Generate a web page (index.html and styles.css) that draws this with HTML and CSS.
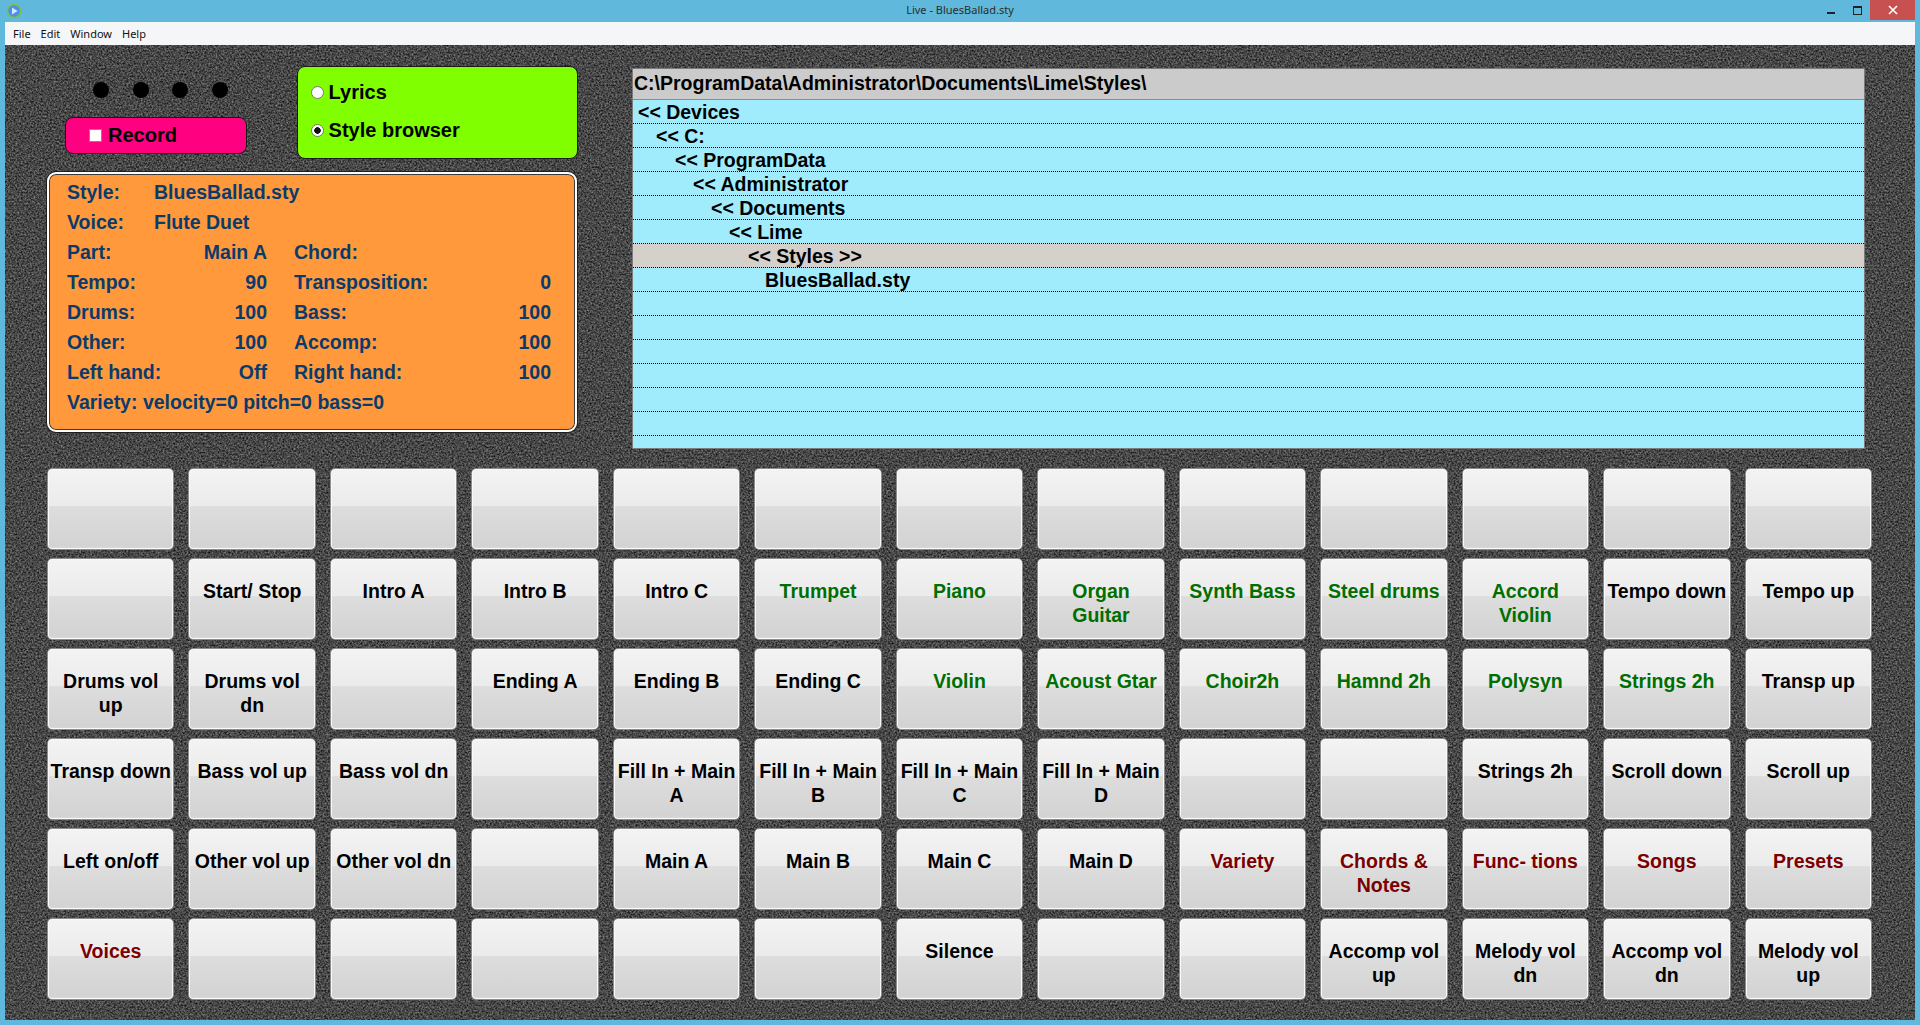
FILE: index.html
```html
<!DOCTYPE html>
<html>
  <head>
    <title>Live - BluesBallad.sty</title>
    <link rel="stylesheet" href="styles.css">
  </head>
  <body>
    <div class="frame">

      <div class="title-bar">
        <div class="title-left">
          <svg class="app-icon" width="16" height="16" viewBox="0 0 16 16">
            <circle cx="8" cy="8" r="6.6" fill="#4f8ee6" stroke="#72c452" stroke-width="1.6"/>
            <path d="M6 4.6 L11.6 8 L6 11.4 Z" fill="#d6e8ff"/>
          </svg>
        </div>
        <div class="title-text">Live - BluesBallad.sty</div>
        <div class="title-right">
          <span class="win-btn"><span class="min-glyph"></span></span>
          <span class="win-btn"><span class="max-glyph"></span></span>
          <span class="win-btn close-btn">
            <svg width="10" height="10" viewBox="0 0 10 10">
              <path d="M1 1 L9 9 M9 1 L1 9" stroke="#fff" stroke-width="1.6"/>
            </svg>
          </span>
        </div>
      </div>

      <div class="client">
        <div class="menu-bar">
          <span class="menu-item">File</span>
          <span class="menu-item">Edit</span>
          <span class="menu-item">Window</span>
          <span class="menu-item">Help</span>
        </div>

        <div class="desk">
          <!-- stucco background -->
          <svg class="grain" width="100%" height="100%">
            <filter id="stucco" color-interpolation-filters="sRGB">
              <feTurbulence type="fractalNoise" baseFrequency="0.55" numOctaves="4" seed="7"/>
              <feColorMatrix type="matrix" values="0.62 0 0 0 -0.03  0.62 0 0 0 -0.03  0.62 0 0 0 -0.03  0 0 0 0 1"/>
            </filter>
            <rect width="100%" height="100%" filter="url(#stucco)"/>
          </svg>

          <div class="top">
            <div class="left-col">
              <div class="controls">
                <div class="rec-box">
                  <div class="dots">
                    <span class="dot"></span>
                    <span class="dot"></span>
                    <span class="dot"></span>
                    <span class="dot"></span>
                  </div>
                  <div class="record"><span class="check"></span>Record</div>
                </div>

                <div class="mode-panel">
                  <div class="option"><span class="radio"></span>Lyrics</div>
                  <div class="option"><span class="radio checked"></span>Style browser</div>
                </div>
              </div>

              <div class="info-panel">
                <div class="info-row">
                  <span class="wide-label">Style:</span><span>BluesBallad.sty</span>
                </div>
                <div class="info-row">
                  <span class="wide-label">Voice:</span><span>Flute Duet</span>
                </div>
                <div class="info-row">
                  <div class="cell-a"><span>Part:</span><span>Main A</span></div>
                  <div class="cell-b"><span>Chord:</span><span></span></div>
                </div>
                <div class="info-row">
                  <div class="cell-a"><span>Tempo:</span><span>90</span></div>
                  <div class="cell-b"><span>Transposition:</span><span>0</span></div>
                </div>
                <div class="info-row">
                  <div class="cell-a"><span>Drums:</span><span>100</span></div>
                  <div class="cell-b"><span>Bass:</span><span>100</span></div>
                </div>
                <div class="info-row">
                  <div class="cell-a"><span>Other:</span><span>100</span></div>
                  <div class="cell-b"><span>Accomp:</span><span>100</span></div>
                </div>
                <div class="info-row">
                  <div class="cell-a"><span>Left hand:</span><span>Off</span></div>
                  <div class="cell-b"><span>Right hand:</span><span>100</span></div>
                </div>
                <div class="info-row">Variety: velocity=0 pitch=0 bass=0</div>
              </div>
            </div>

            <div class="browser">
              <div class="path">C:\ProgramData\Administrator\Documents\Lime\Styles\</div>
              <div class="file-row">&lt;&lt; Devices</div>
              <div class="file-row lv1">&lt;&lt; C:</div>
              <div class="file-row lv2">&lt;&lt; ProgramData</div>
              <div class="file-row lv3">&lt;&lt; Administrator</div>
              <div class="file-row lv4">&lt;&lt; Documents</div>
              <div class="file-row lv5">&lt;&lt; Lime</div>
              <div class="file-row lv6 selected">&lt;&lt; Styles &gt;&gt;</div>
              <div class="file-row lv7">BluesBallad.sty</div>
              <div class="file-row"></div>
              <div class="file-row"></div>
              <div class="file-row"></div>
              <div class="file-row"></div>
              <div class="file-row"></div>
              <div class="file-row"></div>
              <div class="file-row"></div>
            </div>
          </div>

          <div class="pads">
            <!-- row 1 -->
            <div class="pad"></div>
            <div class="pad"></div>
            <div class="pad"></div>
            <div class="pad"></div>
            <div class="pad"></div>
            <div class="pad"></div>
            <div class="pad"></div>
            <div class="pad"></div>
            <div class="pad"></div>
            <div class="pad"></div>
            <div class="pad"></div>
            <div class="pad"></div>
            <div class="pad"></div>

            <!-- row 2 -->
            <div class="pad"></div>
            <div class="pad">Start/ Stop</div>
            <div class="pad">Intro A</div>
            <div class="pad">Intro B</div>
            <div class="pad">Intro C</div>
            <div class="pad voice">Trumpet</div>
            <div class="pad voice">Piano</div>
            <div class="pad voice">Organ<br>Guitar</div>
            <div class="pad voice">Synth Bass</div>
            <div class="pad voice">Steel drums</div>
            <div class="pad voice">Accord<br>Violin</div>
            <div class="pad">Tempo down</div>
            <div class="pad">Tempo up</div>

            <!-- row 3 -->
            <div class="pad">Drums vol<br>up</div>
            <div class="pad">Drums vol<br>dn</div>
            <div class="pad"></div>
            <div class="pad">Ending A</div>
            <div class="pad">Ending B</div>
            <div class="pad">Ending C</div>
            <div class="pad voice">Violin</div>
            <div class="pad voice">Acoust Gtar</div>
            <div class="pad voice">Choir2h</div>
            <div class="pad voice">Hamnd 2h</div>
            <div class="pad voice">Polysyn</div>
            <div class="pad voice">Strings 2h</div>
            <div class="pad">Transp up</div>

            <!-- row 4 -->
            <div class="pad">Transp down</div>
            <div class="pad">Bass vol up</div>
            <div class="pad">Bass vol dn</div>
            <div class="pad"></div>
            <div class="pad">Fill In + Main<br>A</div>
            <div class="pad">Fill In + Main<br>B</div>
            <div class="pad">Fill In + Main<br>C</div>
            <div class="pad">Fill In + Main<br>D</div>
            <div class="pad"></div>
            <div class="pad"></div>
            <div class="pad">Strings 2h</div>
            <div class="pad">Scroll down</div>
            <div class="pad">Scroll up</div>

            <!-- row 5 -->
            <div class="pad">Left on/off</div>
            <div class="pad">Other vol up</div>
            <div class="pad">Other vol dn</div>
            <div class="pad"></div>
            <div class="pad">Main A</div>
            <div class="pad">Main B</div>
            <div class="pad">Main C</div>
            <div class="pad">Main D</div>
            <div class="pad menu">Variety</div>
            <div class="pad menu">Chords &amp;<br>Notes</div>
            <div class="pad menu">Func- tions</div>
            <div class="pad menu">Songs</div>
            <div class="pad menu">Presets</div>

            <!-- row 6 -->
            <div class="pad menu">Voices</div>
            <div class="pad"></div>
            <div class="pad"></div>
            <div class="pad"></div>
            <div class="pad"></div>
            <div class="pad"></div>
            <div class="pad">Silence</div>
            <div class="pad"></div>
            <div class="pad"></div>
            <div class="pad">Accomp vol<br>up</div>
            <div class="pad">Melody vol<br>dn</div>
            <div class="pad">Accomp vol<br>dn</div>
            <div class="pad">Melody vol<br>up</div>
          </div>
        </div>
      </div>
    </div>
  </body>
</html>
```

FILE: styles.css
```css
body {
  margin: 0;
  width: 1920px;
  height: 1025px;
  overflow: hidden;
  font-family: "Liberation Sans", Arial, sans-serif;
}

.frame {
  display: flex;
  flex-direction: column;
  height: 1025px;
  background-color: #60b9dc;
}

/* window chrome */
.title-bar {
  display: grid;
  grid-template-columns: 1fr auto 1fr;
  align-items: start;
  height: 22px;
}

.title-left {
  padding: 3px 0 0 6px;
}

.app-icon {
  display: block;
}

.title-text {
  font-family: "Noto Sans", sans-serif;
  font-size: 11px;
  line-height: 20px;
  color: #2b2b2b;
}

.title-right {
  display: flex;
  justify-content: flex-end;
  padding-right: 5px;
}

.win-btn {
  display: flex;
  justify-content: center;
  align-items: center;
  width: 26px;
  height: 20px;
}

.min-glyph {
  width: 8px;
  height: 2px;
  margin-top: 5px;
  background-color: #222;
}

.max-glyph {
  width: 7px;
  height: 6px;
  border: 1px solid #222;
  border-top-width: 2px;
}

.close-btn {
  width: 45px;
  background-color: #c75050;
}

.client {
  flex: 1;
  display: flex;
  flex-direction: column;
  margin: 0 5px 5px 5px;
}

.menu-bar {
  display: flex;
  height: 23px;
  padding-left: 3px;
  background-color: #f5f6f7;
  font-family: "Noto Sans", sans-serif;
  font-size: 11px;
  line-height: 23px;
  color: #111;
}

.menu-item {
  padding: 0 5px;
}

/* main panel */
.desk {
  flex: 1;
  position: relative;
  padding: 21px 43px 0 42px;
  background-color: #414141;
  overflow: hidden;
}

.grain {
  position: absolute;
  top: 0;
  left: 0;
}

.top {
  position: relative;
  display: flex;
}

.left-col {
  width: 531px;
}

.controls {
  display: flex;
  height: 92px;
}

.rec-box {
  width: 182px;
  margin-left: 18px;
  padding-top: 16px;
}

.dots {
  display: flex;
  gap: 23.5px;
  margin-left: 28px;
}

.dot {
  width: 16px;
  height: 16px;
  border-radius: 50%;
  background-color: #000;
}

.record {
  display: flex;
  align-items: center;
  box-sizing: border-box;
  height: 37px;
  margin-top: 19px;
  padding-left: 23px;
  background-color: #ff0080;
  border: 1px solid #1a1a1a;
  border-radius: 8px;
  font-size: 20px;
  font-weight: bold;
  color: #000;
}

.check {
  box-sizing: border-box;
  width: 13px;
  height: 13px;
  margin-right: 6px;
  background-color: #fff;
  border: 1px solid #8a8a8a;
}

.mode-panel {
  box-sizing: border-box;
  width: 282px;
  height: 93px;
  margin-left: 50px;
  padding: 6px 0 0 13px;
  background-color: #80ff00;
  border: 1px solid #1a1a1a;
  border-radius: 8px;
}

.option {
  display: flex;
  align-items: center;
  height: 38px;
  font-size: 20px;
  font-weight: bold;
  color: #000;
}

.radio {
  box-sizing: border-box;
  width: 13px;
  height: 13px;
  margin-right: 5px;
  border-radius: 50%;
  background-color: #fff;
  border: 1px solid #777;
}

.radio.checked {
  background: radial-gradient(circle, #111 0, #111 3px, #fff 3.5px);
}

.info-panel {
  box-sizing: border-box;
  width: 530px;
  height: 260px;
  margin-top: 14px;
  padding: 3px 0 0 18px;
  background-color: #ff993c;
  border: 2px solid #fff;
  border-radius: 9px;
  box-shadow: 0 0 0 1px #1e1e1e, inset 0 0 0 1px #3a3a3a;
  font-size: 19.5px;
  font-weight: bold;
  color: #0a3b6d;
}

.info-row {
  display: flex;
  height: 30px;
  line-height: 30px;
}

.wide-label {
  width: 87px;
}

.cell-a {
  display: flex;
  justify-content: space-between;
  width: 200px;
}

.cell-b {
  display: flex;
  justify-content: space-between;
  width: 257px;
  margin-left: 27px;
}

/* style browser list */
.browser {
  box-sizing: border-box;
  width: 1233px;
  height: 381px;
  margin: 2px 0 0 54px;
  background-color: #a0ecfc;
  border: 1px solid #7c7c7c;
  overflow: hidden;
  font-size: 19.5px;
  font-weight: bold;
  color: #000;
}

.path {
  height: 30px;
  padding-left: 1px;
  line-height: 28px;
  background-color: #cbcbcb;
  border-bottom: 1px solid #8c8c8c;
}

.file-row {
  box-sizing: border-box;
  height: 24px;
  padding-left: 5px;
  line-height: 25px;
  border-bottom: 1px dotted #000;
}

.file-row.selected {
  background-color: #d6d0cb;
}

.lv1 { padding-left: 23px; }
.lv2 { padding-left: 42px; }
.lv3 { padding-left: 60px; }
.lv4 { padding-left: 78px; }
.lv5 { padding-left: 96px; }
.lv6 { padding-left: 115px; }
.lv7 { padding-left: 132px; }

/* button pads */
.pads {
  position: relative;
  display: grid;
  grid-template-columns: repeat(13, 1fr);
  grid-auto-rows: 82px;
  gap: 8px 14px;
  margin-top: 19px;
}

.pad {
  box-sizing: border-box;
  padding-top: 20px;
  background: linear-gradient(#f3f3f3, #ebebeb 46%, #dddddd 47%, #d3d3d3 96%, #dadada);
  border: 1px solid #8d8d8d;
  border-radius: 5px;
  box-shadow: inset 0 0 0 1px #fafafa;
  text-align: center;
  white-space: nowrap;
  font-size: 19.5px;
  font-weight: bold;
  line-height: 24px;
  color: #000;
}

.pad.voice {
  color: #006e00;
}

.pad.menu {
  color: #7a0000;
}
```
